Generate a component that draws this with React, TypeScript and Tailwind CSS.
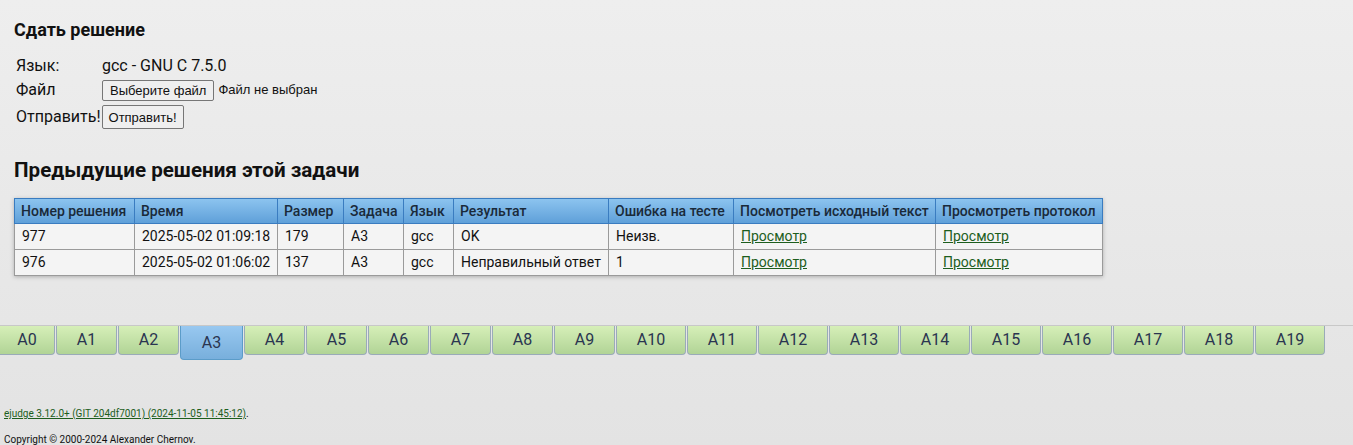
import React from 'react'

const runs = [
  { id: '977', time: '2025-05-02 01:09:18', size: '179', prob: 'A3', lang: 'gcc', result: 'OK', test: 'Неизв.' },
  { id: '976', time: '2025-05-02 01:06:02', size: '137', prob: 'A3', lang: 'gcc', result: 'Неправильный ответ', test: '1' },
]

const headers = ['Номер решения', 'Время', 'Размер', 'Задача', 'Язык', 'Результат', 'Ошибка на тесте', 'Посмотреть исходный текст', 'Просмотреть протокол']
const colWidths = ['w-[120px]', 'w-[143px]', 'w-[66px]', 'w-[60px]', 'w-[50px]', 'w-[155px]', 'w-[125px]', 'w-[202px]', 'w-[167px]']

const tabs = Array.from({ length: 20 }, (_, i) => 'A' + i)

export default function App() {
  return (
    <div
      className="min-h-[445px] w-full bg-gradient-to-b from-[#eeeeee] to-[#e3e3e3] text-[#111]"
      style={{ fontFamily: 'Roboto, "Noto Sans", sans-serif' }}
    >
      {/* Submit form */}
      <div className="px-[14px] pt-[19px]">
        <h2 className="text-[18px] font-bold leading-[22px]">Сдать решение</h2>
        <table className="mt-[13px] text-[16px]">
          <tbody>
            <tr className="h-[24px]">
              <td className="w-[88px] pl-[2px]">Язык:</td>
              <td>gcc - GNU C 7.5.0</td>
            </tr>
            <tr className="h-[24px]">
              <td className="pl-[2px]">Файл</td>
              <td>
                <div className="flex items-center" style={{ fontFamily: '"Liberation Sans", Arial, sans-serif' }}>
                  <button className="h-[21px] rounded-[2px] border border-[#767676] bg-[#efefef] px-[7px] text-[13px] leading-none">
                    Выберите файл
                  </button>
                  <span className="ml-[4px] text-[13px]">Файл не выбран</span>
                </div>
              </td>
            </tr>
            <tr className="h-[30px]">
              <td className="pl-[2px]" colSpan={2}>
                <div className="flex items-center">
                  <span>Отправить!</span>
                  <button
                    className="ml-[1px] h-[24px] rounded-[2px] border border-[#767676] bg-[#efefef] px-[6px] text-[13px] leading-none"
                    style={{ fontFamily: '"Liberation Sans", Arial, sans-serif' }}
                  >
                    Отправить!
                  </button>
                </div>
              </td>
            </tr>
          </tbody>
        </table>

        <h2 className="mt-[24px] text-[20.6px] font-bold leading-[28px]">Предыдущие решения этой задачи</h2>

        <table className="mt-[14px] w-[1088px] table-fixed border-collapse text-[14px] shadow-[0_1px_4px_rgba(0,0,0,0.25)]">
          <thead>
            <tr className="h-[25px] bg-gradient-to-b from-[#8cc4ef] to-[#5d9ed8] text-[#1a2a3a]">
              {headers.map((h, i) => (
                <th key={h} className={'border border-[#3a7cc0] px-[6px] text-left font-medium whitespace-nowrap ' + colWidths[i]}>
                  {h}
                </th>
              ))}
            </tr>
          </thead>
          <tbody>
            {runs.map((r) => (
              <tr key={r.id} className="h-[26px] bg-[#f4f4f4]">
                <td className="border border-[#9a9a9a] px-[7px]">{r.id}</td>
                <td className="border border-[#9a9a9a] px-[7px] whitespace-nowrap">{r.time}</td>
                <td className="border border-[#9a9a9a] px-[7px]">{r.size}</td>
                <td className="border border-[#9a9a9a] px-[7px]">{r.prob}</td>
                <td className="border border-[#9a9a9a] px-[7px]">{r.lang}</td>
                <td className="border border-[#9a9a9a] px-[7px] whitespace-nowrap">{r.result}</td>
                <td className="border border-[#9a9a9a] px-[7px]">{r.test}</td>
                <td className="border border-[#9a9a9a] px-[7px]">
                  <a href="#" className="text-[#1d5e1d] underline">Просмотр</a>
                </td>
                <td className="border border-[#9a9a9a] px-[7px]">
                  <a href="#" className="text-[#1d5e1d] underline">Просмотр</a>
                </td>
              </tr>
            ))}
          </tbody>
        </table>
      </div>

      {/* Problem tabs */}
      <div className="mt-[49px] flex h-[35px] items-start border-t border-[#c8c8c8] text-[16px] text-[#2a3550]">
        {tabs.map((t, i) => {
          const active = t === 'A3'
          const w = i === 0 ? 'w-[55px]' : i < 10 ? 'w-[61px]' : 'w-[70px]'
          return active ? (
            <div
              key={t}
              className="ml-[1px] flex h-[34px] w-[63px] items-end justify-center rounded-b-[4px] border border-t-0 border-[#5b9cc9] bg-gradient-to-b from-[#98c8f0] to-[#78afdc] pb-[4px]"
            >
              {t}
            </div>
          ) : (
            <div
              key={t}
              className={
                'ml-[1px] flex h-[29px] items-center justify-center rounded-b-[4px] border border-t-0 border-[#9aabb8] bg-gradient-to-b from-[#d6efb8] to-[#b1d496] first:ml-0 first:rounded-bl-none first:border-l-0 ' +
                w
              }
            >
              {t}
            </div>
          )
        })}
      </div>

      {/* Footer */}
      <div className="px-[4px] pt-[47px] text-[10px] leading-[13px]">
        <p>
          <a href="#" className="text-[#1d5e1d] underline">ejudge 3.12.0+ (GIT 204df7001) (2024-11-05 11:45:12)</a>.
        </p>
        <p className="mt-[13px]">Copyright © 2000-2024 Alexander Chernov.</p>
      </div>
    </div>
  )
}
